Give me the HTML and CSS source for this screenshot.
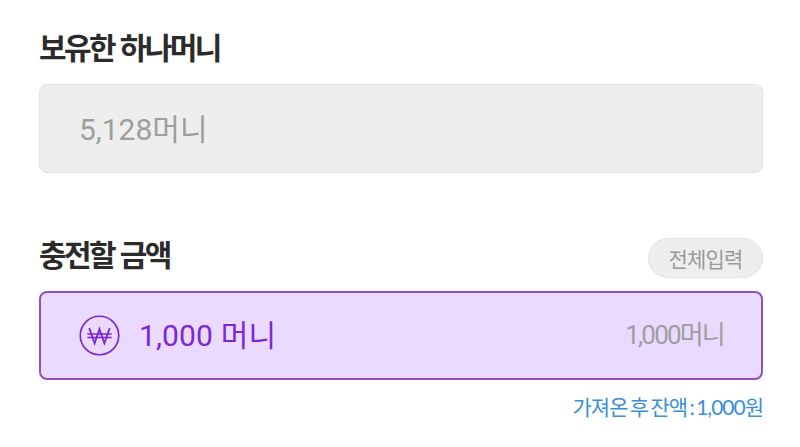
FILE: index.html
```html
<!DOCTYPE html>
<html lang="ko">
<head>
    <meta charset="UTF-8">
    <meta name="viewport" content="width=device-width, initial-scale=1.0">
    <title>하나머니 충전</title>
    <link rel="stylesheet" href="styles.css">
</head>
<body>
    <div class="page">
        <!-- 보유 머니 -->
        <section class="held">
            <h2 class="title">보유한 하나머니</h2>
            <div class="box box-held"><span class="held-text">5,128머니</span></div>
        </section>

        <!-- 충전 금액 -->
        <section class="charge">
            <div class="charge-head">
                <h2 class="title">충전할 금액</h2>
                <button class="all-btn">전체입력</button>
            </div>
            <div class="box box-active">
                <svg class="won-icon" viewBox="0 0 42 42" fill="none" stroke="#7b28d4">
                    <circle cx="21" cy="21" r="19.7" stroke-width="1.7"/>
                    <path d="M10.5 13.5 L16 29 L21 14.5 L26 29 L31.5 13.5" stroke-width="1.9"/>
                    <path d="M8.5 19.5 H33.5 M8.5 23 H33.5" stroke-width="1.4"/>
                </svg>
                <span class="amount">1,000 머니</span>
                <span class="amount-sub">1,000머니</span>
            </div>
            <p class="balance">가져온 후 잔액 : 1,000원</p>
        </section>
    </div>
</body>
</html>
```
FILE: styles.css
```css
* {
    margin: 0;
    padding: 0;
    box-sizing: border-box;
}

body {
    font-family: 'Roboto', 'Noto Sans CJK KR', sans-serif;
    background-color: #fff;
    overflow: hidden;
}

.page {
    width: 800px;
    height: 447px;
    padding: 26px 37px 0 39px;
}

.title {
    font-family: 'Noto Sans CJK KR', sans-serif;
    font-size: 30px;
    line-height: 40px;
    font-weight: 700;
    letter-spacing: -2.6px;
    color: #2b2b2b;
}

.box {
    display: flex;
    align-items: center;
    height: 89px;
    border-radius: 8px;
}

.held .box {
    margin-top: 18px;
}

.box-held {
    padding-left: 39px;
    color: #9e9e9e;
    background-color: #eeeeee;
    border: 1.5px solid #e2e2e2;
}

.held-text {
    font-size: 30px;
    letter-spacing: 0;
    padding-bottom: 4px;
}

.charge {
    margin-top: 65px;
}

.charge-head {
    display: flex;
    justify-content: space-between;
    align-items: center;
    height: 40px;
    margin-bottom: 13px;
}

.charge-head .title {
    margin-bottom: 10px;
}

.all-btn {
    width: 115px;
    height: 40px;
    font-family: 'Noto Sans CJK KR', sans-serif;
    font-size: 21px;
    letter-spacing: -0.8px;
    color: #9a9a9a;
    background-color: #eeeeee;
    border: 1.5px solid #e2e2e2;
    border-radius: 20px;
}

.box-active {
    padding: 0 37px 0 38px;
    background-color: #ebdaff;
    border: 2px solid #8f50c4;
}

.won-icon {
    width: 41px;
    height: 41px;
    flex-shrink: 0;
    margin-bottom: 1px;
}

.amount {
    margin-left: 19px;
    padding-bottom: 6px;
    font-size: 30px;
    letter-spacing: 0.15px;
    color: #7b28d4;
}

.amount-sub {
    margin-left: auto;
    padding-bottom: 6px;
    font-size: 26px;
    letter-spacing: -1.8px;
    color: #9e9e9e;
}

.balance {
    margin-top: 12px;
    text-align: right;
    font-family: 'Lato', 'Noto Sans CJK KR', sans-serif;
    font-size: 21px;
    line-height: 30px;
    letter-spacing: -1px;
    word-spacing: -2px;
    color: #3a8fd6;
}
```
